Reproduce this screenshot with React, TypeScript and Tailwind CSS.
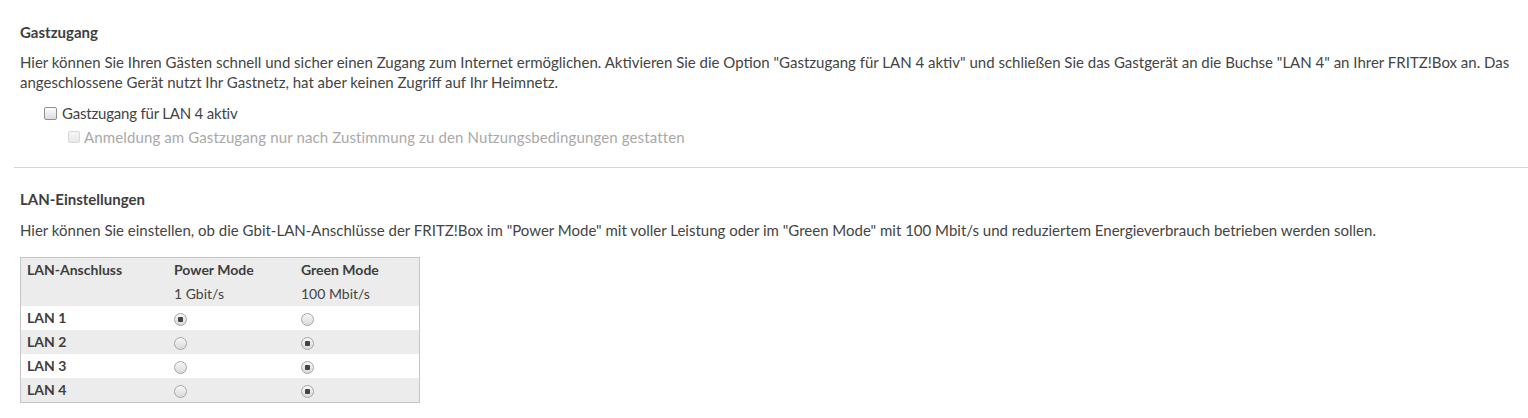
import React from "react"

const font = { fontFamily: "Lato, 'Open Sans', sans-serif" }

function Checkbox({ disabled }: { disabled?: boolean }) {
  return (
    <span
      className={
        disabled
          ? "inline-block w-[12px] h-[12px] rounded-[2px] border border-[#d8d8d8] bg-gradient-to-b from-[#f6f6f6] to-[#e8e8e8]"
          : "inline-block w-[13px] h-[13px] rounded-[2px] border border-[#8f8f8f] bg-gradient-to-b from-[#fdfdfd] to-[#dcdcdc]"
      }
    />
  )
}

function Radio({ checked }: { checked?: boolean }) {
  return (
    <span className="relative inline-flex items-center justify-center w-[13px] h-[13px] rounded-full border border-[#a6a6a6] bg-gradient-to-b from-[#f7f7f7] to-[#dadada] align-middle">
      {checked && <span className="w-[5px] h-[5px] rounded-[1px] bg-[#4a3f4f]" />}
    </span>
  )
}

const rows = [
  { name: "LAN 1", power: true },
  { name: "LAN 2", power: false },
  { name: "LAN 3", power: false },
  { name: "LAN 4", power: false },
]

export default function App() {
  return (
    <div className="bg-white w-[1528px] h-[418px] pl-[14px] text-[15px] text-[#444] leading-[20px]" style={font}>
      <div className="px-[6px] pt-[22px] pb-[20px]">
        <h2 className="font-bold text-[15px] text-[#3e3e3e]">Gastzugang</h2>
        <p className="mt-[10px] pr-[4px]">
          Hier können Sie Ihren Gästen schnell und sicher einen Zugang zum Internet ermöglichen. Aktivieren Sie die Option "Gastzugang für LAN 4 aktiv" und schließen Sie das Gastgerät an die Buchse "LAN 4" an Ihrer FRITZ!Box an. Das angeschlossene Gerät nutzt Ihr Gastnetz, hat aber keinen Zugriff auf Ihr Heimnetz.
        </p>
        <div className="mt-[11px] ml-[24px] flex items-center gap-[5px] h-[20px]">
          <Checkbox />
          <span className="tracking-[-0.2px]">Gastzugang für LAN 4 aktiv</span>
        </div>
        <div className="mt-[4px] ml-[48px] flex items-center gap-[4px] h-[20px] text-[#a9a9a9]">
          <Checkbox disabled />
          <span className="tracking-[0.12px]">Anmeldung am Gastzugang nur nach Zustimmung zu den Nutzungsbedingungen gestatten</span>
        </div>
      </div>
      <hr className="border-0 border-t border-[#d6d6d6]" />
      <div className="px-[6px] pt-[21px]">
        <h2 className="font-bold text-[15px] text-[#3e3e3e]">LAN-Einstellungen</h2>
        <p className="mt-[11px]">
          Hier können Sie einstellen, ob die Gbit-LAN-Anschlüsse der FRITZ!Box im "Power Mode" mit voller Leistung oder im "Green Mode" mit 100 Mbit/s und reduziertem Energieverbrauch betrieben werden sollen.
        </p>
        <table className="mt-[17px] w-[400px] table-fixed border-separate border-spacing-0 border border-[#c6c6c6] text-[14px]">
          <colgroup>
            <col className="w-[147px]" />
            <col className="w-[127px]" />
            <col className="w-[124px]" />
          </colgroup>
          <thead className="bg-[#ececec]">
            <tr className="h-[24px] font-bold text-[#3e3e3e]">
              <th className="text-left font-bold pl-[6px]">LAN-Anschluss</th>
              <th className="text-left font-bold pl-[6px]">Power Mode</th>
              <th className="text-left font-bold pl-[6px]">Green Mode</th>
            </tr>
            <tr className="h-[24px]">
              <td className="pl-[6px]" />
              <td className="pl-[6px]">1 Gbit/s</td>
              <td className="pl-[6px]">100 Mbit/s</td>
            </tr>
          </thead>
          <tbody>
            {rows.map((r, i) => (
              <tr key={r.name} className={i % 2 === 1 ? "h-[24px] bg-[#ececec]" : "h-[24px] bg-white"}>
                <td className="pl-[6px] font-bold text-[#3e3e3e]">{r.name}</td>
                <td className="pl-[6px] leading-[0] pt-[2px]">
                  <Radio checked={r.power} />
                </td>
                <td className="pl-[6px] leading-[0] pt-[2px]">
                  <Radio checked={!r.power} />
                </td>
              </tr>
            ))}
          </tbody>
        </table>
      </div>
    </div>
  )
}
